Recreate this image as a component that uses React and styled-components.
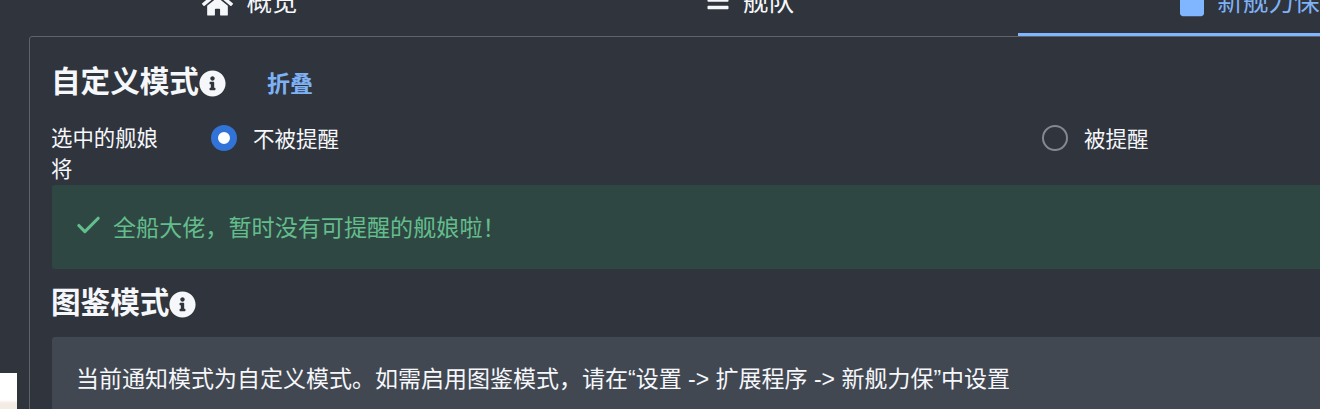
import React from "react";
import styled, { createGlobalStyle } from "styled-components";
import { FaHome, FaBars, FaSquare, FaInfoCircle } from "react-icons/fa";
import { Check } from "lucide-react";

const GlobalStyle = createGlobalStyle`
  html, body {
    margin: 0;
    height: 100%;
    overflow: hidden;
    background: #2f343d;
  }
  body {
    font-family: "Liberation Sans", "Noto Sans CJK SC", sans-serif;
    color: #f5f7fa;
  }
`;

const Page = styled.div`
  position: relative;
  width: 1320px;
  height: 409px;
  overflow: hidden;
  padding-left: 29px;
  box-sizing: border-box;
`;

const Tabs = styled.div`
  display: flex;
  gap: 36px;
  height: 36px;
  margin-left: -11px;
  align-items: flex-start;
  position: relative;
  z-index: 1;
`;

const Tab = styled.div`
  flex: 0 0 464px;
  height: 47px;
  box-sizing: border-box;
  display: flex;
  justify-content: center;
  gap: 13px;
  font-size: 25.6px;
  line-height: 26px;
  margin-top: -11px;
  color: ${(p) => (p.$active ? "#7fb2f5" : "#f5f7fa")};
  border-bottom: 3px solid ${(p) => (p.$active ? "#80b5ff" : "transparent")};
  svg {
    margin-top: -1px;
    flex: none;
    color: ${(p) => (p.$active ? "#80b5ff" : "#f5f7fa")};
  }
`;

const SquareIcon = styled(FaSquare)`
  font-size: 26px;
  width: 24px;
  height: 30px;
`;

const Panel = styled.div`
  width: 1400px;
  height: 400px;
  box-sizing: border-box;
  border: 1px solid #5f6268;
  border-radius: 3px 0 0 0;
  padding: 25px 22px 0;
`;

const TitleRow = styled.div`
  display: flex;
  align-items: center;
  height: 40px;
`;

const Title = styled.h3`
  margin: 0 0 0 -1px;
  font-size: 29.6px;
  line-height: 40px;
  font-weight: 700;
`;

const InfoIcon = styled(FaInfoCircle)`
  font-size: 27px;
  margin-top: 3px;
  flex: none;
`;

const Collapse = styled.a`
  margin-left: 41px;
  font-size: 23px;
  font-weight: 700;
  color: #7fb2f5;
`;

const RadioRow = styled.div`
  display: flex;
  margin-top: 20px;
`;

const Label = styled.div`
  width: 115px;
  margin-left: -1px;
  padding-top: 2px;
  font-size: 21.4px;
  line-height: 31px;
`;

const Radio = styled.div`
  display: flex;
  align-items: center;
  gap: 16px;
  height: 31px;
  width: ${(p) => p.$width}px;
  margin-left: ${(p) => p.$left}px;
  font-size: 21.5px;
`;

const Dot = styled.span`
  width: 26px;
  height: 26px;
  box-sizing: border-box;
  border-radius: 50%;
  flex: none;
  background: ${(p) => (p.$on ? "#fff" : "transparent")};
  border: ${(p) => (p.$on ? "7px solid #3273d8" : "2px solid #85888e")};
`;

const Alert = styled.div`
  display: flex;
  align-items: center;
  gap: 9px;
  height: 84px;
  box-sizing: border-box;
  padding: 0 0 ${(p) => (p.$kind === "success" ? "3px" : "5px")} 24px;
  margin-top: ${(p) => (p.$kind === "success" ? "-1px" : "0")};
  border-radius: 3px 0 0 3px;
  font-size: ${(p) => (p.$kind === "success" ? "23.1px" : "23px")};
  background: ${(p) => (p.$kind === "success" ? "#2f4743" : "#424852")};
  color: ${(p) => (p.$kind === "success" ? "#63bd8c" : "#f5f7fa")};
`;

const CheckIcon = styled(Check)`
  margin-left: -2px;
  margin-right: 1px;
  flex: none;
`;

const SecondTitle = styled(TitleRow)`
  margin: 14px 0 14px;
`;

const Corner = styled.div`
  position: absolute;
  left: 0;
  top: 373px;
  width: 17px;
  height: 36px;
  background: linear-gradient(#ffffff 0, #ffffff 27px, #f3ece4 30px);
`;

const App = () => {
  return (
    <Page>
      <GlobalStyle />
      <Tabs>
        <Tab><FaHome size={31} />概览</Tab>
        <Tab><FaBars size={24} />舰队</Tab>
        <Tab $active><SquareIcon preserveAspectRatio="none" />新舰力保</Tab>
      </Tabs>
      <Panel>
        <TitleRow>
          <Title>自定义模式</Title>
          <InfoIcon />
          <Collapse>折叠</Collapse>
        </TitleRow>
        <RadioRow>
          <Label>选中的舰娘将</Label>
          <Radio $left={45} $width={831}><Dot $on />不被提醒</Radio>
          <Radio $left={0} $width={200}><Dot />被提醒</Radio>
        </RadioRow>
        <Alert $kind="success">
          <CheckIcon size={29} strokeWidth={2.6} />
          全船大佬，暂时没有可提醒的舰娘啦！
        </Alert>
        <SecondTitle>
          <Title>图鉴模式</Title>
          <InfoIcon />
        </SecondTitle>
        <Alert>当前通知模式为自定义模式。如需启用图鉴模式，请在“设置 -&gt; 扩展程序 -&gt; 新舰力保”中设置</Alert>
      </Panel>
      <Corner />
    </Page>
  );
};

export default App;
